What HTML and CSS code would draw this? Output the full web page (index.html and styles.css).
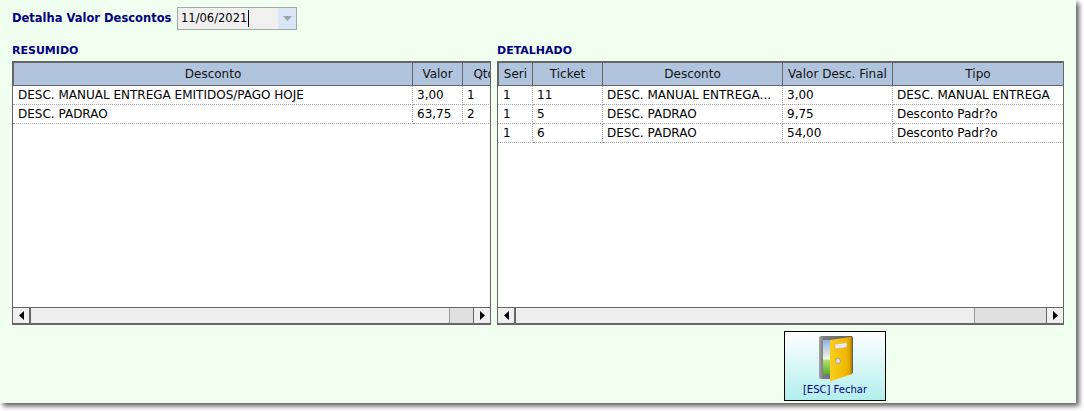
FILE: index.html
```html
<!DOCTYPE html>
<html lang="pt">
<head>
<meta charset="utf-8">
<title>Detalha Valor Descontos</title>
<link rel="stylesheet" href="styles.css">
</head>
<body>
<main class="window">
  <div class="toolbar">
    <label class="title">Detalha Valor Descontos</label>
    <div class="datebox">
      <span class="datetext">11/06/2021</span><span class="caret"></span>
      <span class="datefill"></span>
      <span class="dropbtn"><svg width="9" height="5" viewBox="0 0 9 5"><path d="M0 0h9L4.500 5z" fill="#9aa3ae"/></svg></span>
    </div>
  </div>
  <div class="panels">
    <section class="panel panel-left">
      <h2 class="heading">RESUMIDO</h2>
      <div class="grid">
        <div class="grid-body">
          <table class="table table-left">
            <colgroup><col class="c-l1"><col class="c-l2"><col class="c-l3"></colgroup>
            <thead><tr><th>Desconto</th><th>Valor</th><th>Qtde</th></tr></thead>
            <tbody>
              <tr><td>DESC. MANUAL ENTREGA EMITIDOS/PAGO HOJE</td><td>3,00</td><td>1</td></tr>
              <tr><td>DESC. PADRAO</td><td>63,75</td><td>2</td></tr>
            </tbody>
          </table>
        </div>
        <div class="scrollbar">
          <span class="sb-btn"><svg width="5" height="9" viewBox="0 0 5 9"><path d="M5 0v9L0 4.500z"/></svg></span>
          <span class="sb-thumb sb-thumb-left"></span>
          <span class="sb-track"></span>
          <span class="sb-btn sb-btn-end"><svg width="5" height="9" viewBox="0 0 5 9"><path d="M0 0v9l5-4.500z"/></svg></span>
        </div>
      </div>
    </section>
    <section class="panel panel-right">
      <h2 class="heading">DETALHADO</h2>
      <div class="grid">
        <div class="grid-body">
          <table class="table table-right">
            <colgroup><col class="c-r1"><col class="c-r2"><col class="c-r3"><col class="c-r4"><col class="c-r5"></colgroup>
            <thead><tr><th>Seri</th><th>Ticket</th><th>Desconto</th><th>Valor Desc. Final</th><th>Tipo</th></tr></thead>
            <tbody>
              <tr><td>1</td><td>11</td><td>DESC. MANUAL ENTREGA...</td><td>3,00</td><td>DESC. MANUAL ENTREGA</td></tr>
              <tr><td>1</td><td>5</td><td>DESC. PADRAO</td><td>9,75</td><td>Desconto Padr?o</td></tr>
              <tr><td>1</td><td>6</td><td>DESC. PADRAO</td><td>54,00</td><td>Desconto Padr?o</td></tr>
            </tbody>
          </table>
        </div>
        <div class="scrollbar">
          <span class="sb-btn"><svg width="5" height="9" viewBox="0 0 5 9"><path d="M5 0v9L0 4.500z"/></svg></span>
          <span class="sb-thumb sb-thumb-right"></span>
          <span class="sb-track"></span>
          <span class="sb-btn sb-btn-end"><svg width="5" height="9" viewBox="0 0 5 9"><path d="M0 0v9l5-4.500z"/></svg></span>
        </div>
      </div>
    </section>
  </div>
  <div class="actions">
    <button class="close-btn" type="button">
      <svg class="door" width="37" height="48" viewBox="0 0 37 48">
        <defs>
          <linearGradient id="frame" x1="0" x2="1" y1="0" y2="0"><stop offset="0" stop-color="#a8a8a8"/><stop offset=".12" stop-color="#7c7c7c"/><stop offset="1" stop-color="#5e5e5e"/></linearGradient>
          <linearGradient id="sky" x1="0" x2="0" y1="0" y2="1"><stop offset="0" stop-color="#8fb4e4"/><stop offset=".55" stop-color="#f4f6e4"/><stop offset=".6" stop-color="#b8e070"/><stop offset="1" stop-color="#58ad2c"/></linearGradient>
          <linearGradient id="leaf" x1="0" x2="1" y1="0" y2="0"><stop offset="0" stop-color="#f9d020"/><stop offset=".75" stop-color="#efb600"/><stop offset="1" stop-color="#d49c00"/></linearGradient>
        </defs>
        <path d="M2 3Q2 1 4 1H34.500Q36 1 36 3V38L13 44H4Q2 44 2 42z" fill="url(#frame)"/>
        <rect x="6" y="5" width="8" height="34" fill="url(#sky)"/>
        <path d="M13 5 34 2Q35 2 35 3.500V39L13 46.500z" fill="url(#leaf)"/>
        <path d="M35 2.500V39L33.500 39.500V3z" fill="#b98600"/>
        <path d="M18 9 30 7.500v5L18 14z" fill="#e8e8f8" stroke="#d9a400" stroke-width=".5"/>
        <circle cx="21" cy="26" r="2.600" fill="#dcdcd0" stroke="#a39a80" stroke-width=".7"/>
      </svg>
      <span class="close-label">[ESC] Fechar</span>
    </button>
  </div>
</main>
</body>
</html>
```

FILE: styles.css
```css
* { box-sizing: border-box; }
html, body { margin: 0; height: 100%; background: #fff; overflow: hidden; }
body { font-family: "DejaVu Sans", Verdana, sans-serif; font-size: 12px; color: #000; }

.window {
  width: 1076px;
  height: 403px;
  background: #f0fff0;
  box-shadow: 3px 3px 5px rgba(0, 0, 0, .65);
  padding: 6px 12px 0;
  display: flex;
  flex-direction: column;
}

.toolbar { display: flex; align-items: center; height: 24px; gap: 5px; }
.title { font-weight: bold; font-size: 11.5px; color: #000080; width: 160px; white-space: nowrap; }
.datebox {
  width: 120px;
  height: 23px;
  border: 1px solid #a5a5a5;
  background: #f0f0f0;
  display: flex;
  align-items: center;
  padding-left: 3px;
}
.datetext { width: 67px; font-size: 11.5px; white-space: nowrap; }
.caret { width: 1px; height: 17px; background: #000; }
.datefill { flex: 1; }
.dropbtn { width: 18px; height: 100%; background: #d8e6f8; display: flex; align-items: center; justify-content: center; }

.panels { display: flex; gap: 6px; margin-top: 15px; }
.panel-left { width: 479px; }
.panel-right { width: 567px; }
.heading { margin: 0 0 4px; font-size: 11px; line-height: 12px; height: 12px; font-weight: bold; color: #000080; white-space: nowrap; }

.grid {
  height: 264px;
  border: 1px solid #666;
  border-width: 2px 1px;
  background: #fff;
  display: flex;
  flex-direction: column;
}
.grid-body { flex: 1; overflow: hidden; min-height: 0; }
.table { border-collapse: separate; border-spacing: 0; table-layout: fixed; white-space: nowrap; }
.table-left { width: 500px; }
.table-right { width: 565px; }
.c-l1 { width: 400px; } .c-l2 { width: 50px; } .c-l3 { width: 50px; }
.c-r1 { width: 35px; } .c-r2 { width: 70px; } .c-r3 { width: 180px; } .c-r4 { width: 110px; } .c-r5 { width: 170px; }

th {
  height: 23px;
  padding: 0;
  background: #b0c4de;
  font-weight: normal;
  font-size: 12px;
  text-align: center;
  color: #111;
  border-right: 1px solid #666;
  border-bottom: 1px solid #666;
  overflow: hidden;
}
th:first-child { border-left: 1px solid #666; }
th:last-child { border-right: 0; }
td {
  height: 19px;
  padding: 0 0 0 4px;
  overflow: hidden;
  font-size: 12px;
  border-right: 1px dotted #aaa;
  border-bottom: 1px dotted #aaa;
}
td:first-child { padding-left: 5px; }
td:last-child { border-right: 0; }

.scrollbar {
  height: 16px;
  flex: none;
  display: flex;
  border-top: 1px solid #666;
  background: #eee;
}
.sb-btn {
  width: 18px;
  flex: none;
  display: flex;
  align-items: center;
  justify-content: center;
  background: #f0f0f0;
  border-right: 2px solid #666;
}
.sb-btn-end { width: 17px; border-right: 0; border-left: 1px solid #666; }
.sb-thumb { background: #eee; flex: none; }
.sb-thumb-left { width: 418px; }
.sb-thumb-right { width: 458px; }
.sb-track { flex: 1; background: #e0e0e0; border-left: 1px solid #999; }

.actions { display: flex; padding: 6px 0 0 772px; }
.close-btn {
  width: 102px;
  height: 70px;
  padding: 3px 0 0;
  border: 1px solid #000;
  background: linear-gradient(#fff, #b2eeee);
  display: flex;
  flex-direction: column;
  align-items: center;
  font-family: inherit;
}
.door { display: block; flex: none; }
.close-label { font-size: 10px; line-height: 12px; margin-top: 1px; color: #00008b; white-space: nowrap; }
```
